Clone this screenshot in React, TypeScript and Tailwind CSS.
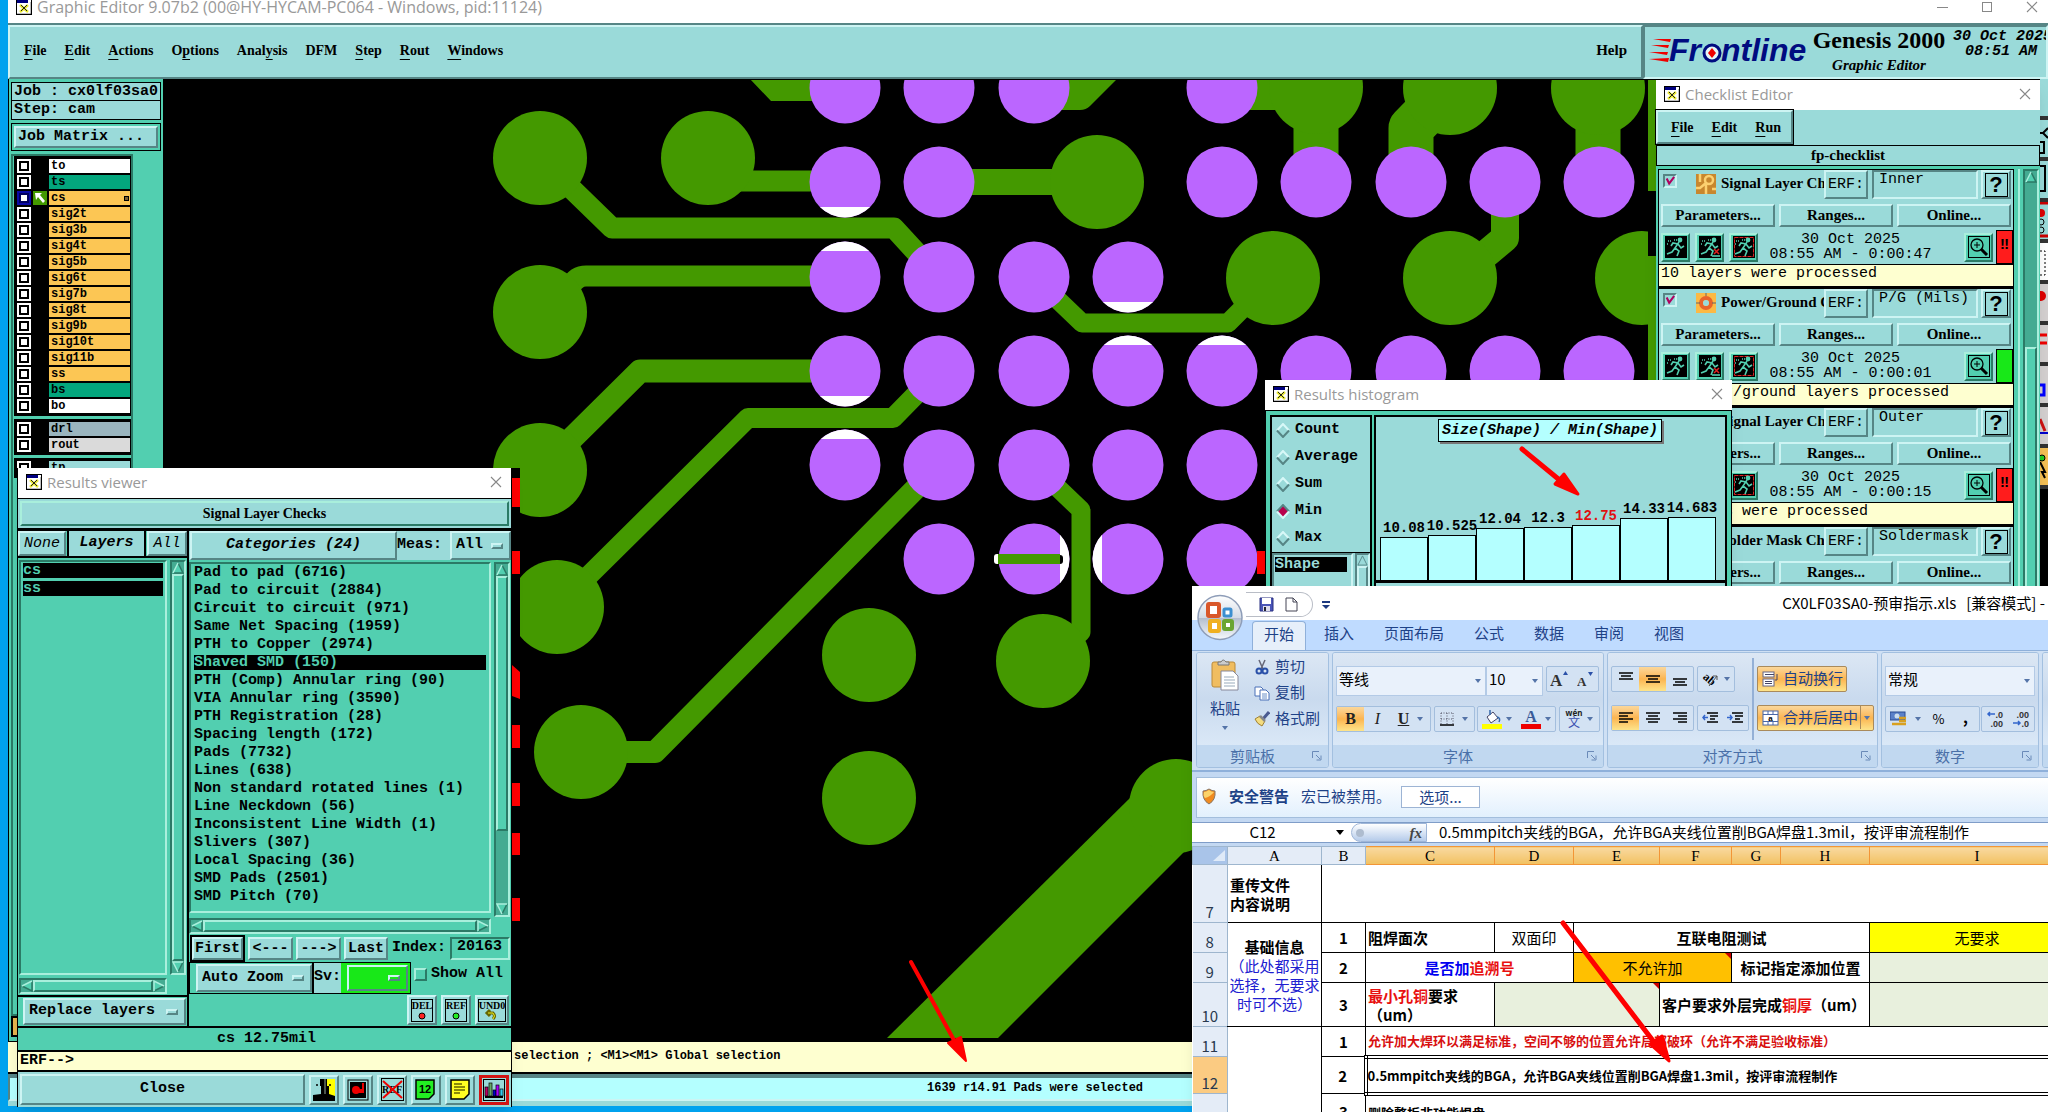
import React from "react";

const OUT =
  "border-2 border-t-[#cdf4f3] border-l-[#cdf4f3] border-r-[#568585] border-b-[#568585]";
const IN =
  "border-2 border-t-[#568585] border-l-[#568585] border-r-[#cdf4f3] border-b-[#cdf4f3]";
const T_OUT =
  "border-2 border-t-[#a9efdc] border-l-[#a9efdc] border-r-[#2b7a66] border-b-[#2b7a66]";
const T_IN =
  "border-2 border-t-[#2b7a66] border-l-[#2b7a66] border-r-[#a9efdc] border-b-[#a9efdc]";
const MONO = "font-['Liberation_Mono',monospace]";
const SERIF = "font-['Liberation_Serif',serif]";
const CJK = "font-['Noto_Sans_CJK_SC',sans-serif]";

/* ---------- shared pieces ---------- */

function AppIcon() {
  return (
    <svg width="16" height="16" viewBox="0 0 16 16" className="shrink-0">
      <rect x="0.5" y="0.5" width="15" height="15" fill="#fff" stroke="#000" />
      <rect x="1" y="1" width="11" height="3" fill="#000080" />
      <path d="M4 6 L12 13 M12 6 L4 13" stroke="#eaea30" strokeWidth="2.5" />
      <path d="M5 6 L11 12 M11 6 L5 12" stroke="#222" strokeWidth="1" />
      <path d="M15.500 3 V15.500 H1" stroke="#000" strokeWidth="1.500" fill="none" />
    </svg>
  );
}

function Cross() {
  return (
    <svg width="12" height="12" viewBox="0 0 12 12">
      <path d="M1 1 L11 11 M11 1 L1 11" stroke="#888" strokeWidth="1.1" />
    </svg>
  );
}

function TitleBar({ title }: { title: string }) {
  return (
    <header className="flex h-[30px] shrink-0 items-center bg-white pr-[9px] pb-[2px] pl-2">
      <AppIcon />
      <h2 className="ml-[5px] font-['Open_Sans',sans-serif] text-[15px] leading-5 font-normal text-[#999]">{title}</h2>
      <button aria-label={"Close " + title} className="ml-auto">
        <Cross />
      </button>
    </header>
  );
}

function Menu({ items }: { items: string[][] }) {
  return (
    <nav className={SERIF + " flex gap-[18px] text-[14px] font-bold text-black"}>
      {items.map(([pre, key, post]) => (
        <button key={pre + key + post}>
          {pre}
          <span className="underline decoration-1 underline-offset-4">{key}</span>
          {post}
        </button>
      ))}
    </nav>
  );
}

function Arrow({ d }: { d: "up" | "down" | "left" | "right" }) {
  const shapes = {
    up: ["M6 1 L11 11 H1 Z", "M6 1 L11 11 H1", "M1 11 L6 1"],
    down: ["M6 11 L1 1 H11 Z", "M6 11 L11 1", "M11 1 H1 L6 11"],
    left: ["M1 6 L11 1 V11 Z", "M11 1 V11 L1 6", "M1 6 L11 1"],
    right: ["M11 6 L1 1 V11 Z", "M1 11 L11 6", "M1 11 V1 L11 6"],
  };
  const [body, dark, light] = shapes[d];
  return (
    <svg width="12" height="12" viewBox="0 0 12 12" className="shrink-0">
      <path d={body} fill="#52cfb0" />
      <path d={dark} fill="none" stroke="#2b7a66" strokeWidth="1.5" />
      <path d={light} fill="none" stroke="#a9efdc" strokeWidth="1.5" />
    </svg>
  );
}

function VScroll({ rest }: { rest?: boolean }) {
  return (
    <div className={T_IN + " flex w-4 shrink-0 flex-col bg-[#44ab92]"}>
      <Arrow d="up" />
      <div className={T_OUT + " flex-[7] bg-[#52cfb0]"} />
      {rest && <div className="flex-[2]" />}
      <Arrow d="down" />
    </div>
  );
}

function HScroll() {
  return (
    <div className={T_IN + " flex h-4 shrink-0 bg-[#44ab92]"}>
      <Arrow d="left" />
      <div className={T_OUT + " flex-1 bg-[#52cfb0]"} />
      <Arrow d="right" />
    </div>
  );
}

function OptionMenu({ label, value, className, bg = "bg-[#9adad9]" }: { label: string; value: string; className: string; bg?: string }) {
  return (
    <div className={"relative " + className}>
      <select
        aria-label={label}
        className={OUT + " h-full w-full appearance-none pl-1 font-bold outline-none " + bg}
      >
        <option>{value}</option>
      </select>
      <span className={OUT + " pointer-events-none absolute top-1/2 right-2 h-[6px] w-3 -translate-y-1/2 " + bg} />
    </div>
  );
}

/* ---------- main editor ---------- */

const LAYERS: [string, string][][] = [
  [
    ["to", "bg-white"], ["ts", "bg-[#03a67d]"], ["cs", "bg-[#fcc654]"], ["sig2t", "bg-[#fcc654]"],
    ["sig3b", "bg-[#fcc654]"], ["sig4t", "bg-[#fcc654]"], ["sig5b", "bg-[#fcc654]"], ["sig6t", "bg-[#fcc654]"],
    ["sig7b", "bg-[#fcc654]"], ["sig8t", "bg-[#fcc654]"], ["sig9b", "bg-[#fcc654]"], ["sig10t", "bg-[#fcc654]"],
    ["sig11b", "bg-[#fcc654]"], ["ss", "bg-[#fcc654]"], ["bs", "bg-[#03a67d]"], ["bo", "bg-white"],
  ],
  [["drl", "bg-[#9ab5be]"], ["rout", "bg-[#dadada]"]],
  [["tp", "bg-[#9adad9]"]],
];

function LayerRow({ name, bg }: { name: string; bg: string }) {
  const active = name === "cs";
  return (
    <li className="flex h-4 items-center pl-[2px]">
      <button
        aria-label={"Display layer " + name}
        className={"flex h-[14px] w-[14px] items-center justify-center " + (active ? "bg-[#0a0aa8]" : "bg-white")}
      >
        <span className={"h-[10px] w-[10px] border-2 bg-white " + (active ? "border-[#000060]" : "border-black")} />
      </button>
      <span className="flex h-[14px] w-[18px] items-center justify-center">
        {active && (
          <svg width="14" height="14" viewBox="0 0 14 14">
            <rect width="14" height="14" fill="#449900" />
            <path d="M2 2 H9 L7 4 L12 10 L10 12 L5 6 L3 9 Z" fill="#fff" />
          </svg>
        )}
      </span>
      <span className={"flex h-[14px] w-[81px] items-center justify-between pr-[1px] pl-[2px] leading-[14px] " + bg}>
        {name}
        {active && <span className="h-[5px] w-[5px] border border-black bg-[#7a6030]" />}
      </span>
    </li>
  );
}

function LeftPanel() {
  return (
    <aside className={MONO + " flex w-[155px] shrink-0 flex-col overflow-hidden border-l border-black bg-[#52cfb0] px-[2px] pt-[3px]"}>
      <div className="shrink-0 border border-black bg-[#9adad9] pl-[2px] text-[15px] leading-[17px] font-bold whitespace-nowrap">
        Job : cx0lf03sa0
      </div>
      <div className="shrink-0 border border-t-0 border-black bg-[#9adad9] pl-[2px] text-[15px] leading-[18px] font-bold">
        Step: cam
      </div>
      <div className="mt-[3px] shrink-0 border border-black p-[2px]">
        <button className={OUT + " block w-full bg-[#9adad9] pl-[2px] text-left text-[15px] leading-[18px] font-bold"}>
          Job Matrix ...
        </button>
      </div>
      <div className="mt-[3px] w-[122px] flex-1 overflow-hidden border-2 border-[#2b7a66] text-[12px] font-bold">
        {LAYERS.map((g, i) => (
          <ul key={i} className="mb-[3px] ml-[1px] border border-black bg-black py-[1px]">
            {g.map(([n, bg]) => (
              <LayerRow key={n} name={n} bg={bg} />
            ))}
          </ul>
        ))}
      </div>
      <button aria-label="Grid" className="mb-1 h-[21px] w-5 border-2 border-black bg-[#e9b64e]" />
    </aside>
  );
}

const G = "#449900";
const P = "#bb66ff";
const VIAS = [
  [540, 158], [708, 158], [1097, 182], [540, 312], [540, 470], [557, 607], [581, 752], [869, 655], [869, 798],
  [1043, 661], [1273, 278], [1450, 278], [1642, 278], [1316, 87], [1450, 88], [1598, 88], [1176, 806],
];
const COLS = [845, 939, 1034, 1128, 1222, 1316, 1411, 1505, 1599];
const PADS: [number, number[]][] = [
  [88, [0, 1, 2, 4]],
  [182, [0, 1, 4, 5, 6, 7, 8]],
  [277, [0, 1, 2, 3]],
  [371, [0, 1, 2, 3, 4, 5, 6, 7, 8]],
  [465, [0, 1, 2, 3, 4]],
  [559, [1, 2, 3, 4]],
];
const TRACES: [string, number][] = [
  ["M540 158 L612 228 H894 L939 277", 21],
  ["M730 181 H845", 21],
  ["M570 287 Q576 276 586 276 H845", 21],
  ["M540 470 L640 371 H845", 23],
  ["M557 607 L748 418 H893 L939 371", 20],
  ["M939 465 L655 752 H581", 22],
  ["M1034 465 L1081 510 V632 L1056 654", 19],
  ["M1034 277 L1082 323 H1228 L1273 278", 19],
  ["M939 182 H1097", 26],
  ["M1222 94 H1316", 32],
  ["M1316 87 V182", 45],
  ["M1411 182 V128 L1450 88", 45],
  ["M1598 88 V182", 45],
  ["M1505 182 V238 L1450 284", 28],
];
const CUTS = [
  [845, 182, 207, 1], [845, 277, 251, 0], [845, 371, 396, 1], [845, 465, 439, 0],
  [1128, 277, 302, 1], [1128, 371, 345, 0], [1222, 371, 345, 0],
];

function Board() {
  return (
    <svg className="h-full min-w-0 flex-1 bg-black" aria-label="Board view">
      <defs>
        <clipPath id="col2"><rect x="1060" y="520" width="20" height="80" /></clipPath>
        <clipPath id="col3"><rect x="1080" y="520" width="22" height="80" /></clipPath>
        {CUTS.map(([, , y, down], i) => (
          <clipPath id={"cut" + i} key={i}>
            <rect x="800" width="500" y={down ? y : y - 40} height="40" />
          </clipPath>
        ))}
        <clipPath id="area"><path d="M170 80 H1648 V1038 H520 V468 H170 Z" /></clipPath>
      </defs>
      <g transform="translate(-163 -79)">
        <g clipPath="url(#area)">
          <path d="M750 79 L771 101 H845 V79 Z M1069 79 H1117 L1090 106 Q1086 110 1080 110 H1045 V79 Z" fill={G} />
          <path d="M1131 797 L887 1038 H998 L1184 852 Z" fill={G} />
          {TRACES.map(([d, w]) => (
            <path key={d} d={d} stroke={G} strokeWidth={w} fill="none" strokeLinejoin="round" />
          ))}
          {VIAS.map(([x, y]) => (
            <circle key={x + "-" + y} cx={x} cy={y} r="47" fill={G} />
          ))}
          {PADS.map(([y, cols]) =>
            cols.map((c) => <circle key={c + "-" + y} cx={COLS[c]} cy={y} r="35.5" fill={P} />)
          )}
          {CUTS.map(([x, y], i) => (
            <circle key={i} cx={x} cy={y} r="35.5" fill="#fff" clipPath={"url(#cut" + i + ")"} />
          ))}
          <circle cx="1034" cy="559" r="35.5" fill="#fff" clipPath="url(#col2)" />
          <circle cx="1128" cy="559" r="35.5" fill="#fff" clipPath="url(#col3)" />
          <rect x="994" y="554" width="10" height="10" rx="3" fill="#fff" />
          <rect x="1055" y="555" width="8" height="9" rx="3" fill="#000" />
          <rect x="998" y="554" width="62" height="10" fill={G} />
        </g>
        <path d="M1648 80 h12 v111 h-12 Z M1648 256 h12 v324 h-12 Z" fill={G} />
        <path d="M512 478 h8 v29 h-8 Z M512 551 h8 v23 h-8 Z M512 665 l8 7 v27 l-8 -3 Z M512 725 h8 v23 h-8 Z M512 783 h8 v23 h-8 Z M512 833 h8 v22 h-8 Z M512 898 h8 v23 h-8 Z M1257 551 h8 v23 h-8 Z" fill="#f00" />
      </g>
    </svg>
  );
}

function ToolStrip() {
  const items: [string, React.ReactNode][] = [
    ["bg-[#9adad9]", null],
    ["bg-[#9adad9]", <path d="M8 8 L3 13 H0 M3 13 L8 18 M0 22 H4 V33 H0" stroke="#000" strokeWidth="2" fill="none" />],
    ["bg-[#9adad9]", <path d="M0 5 H5 V30 H0" stroke="#000" strokeWidth="2" fill="none" />],
    ["bg-[#9adad9]", <g><path d="M0 1 H8 M0 34 H8" stroke="#c00" strokeWidth="3" /><circle cx="1" cy="11" r="4" fill="#d00" /><circle cx="1" cy="20" r="3" fill="none" stroke="#000" /><circle cx="1" cy="28" r="3" fill="none" stroke="#000" /></g>],
    ["bg-white", <path d="M0 8 H5 V32 H0" stroke="#000" strokeDasharray="2 2" fill="none" />],
    ["bg-[#d4d0d0]", <circle cx="1" cy="12" r="5" fill="#d00" />],
    ["bg-[#d4d0d0]", <path d="M0 10 H7 M0 18 H7" stroke="#e00" strokeWidth="3" />],
    ["bg-[#d4d0d0]", <path d="M0 19 H4 V29 H0" stroke="#00f" strokeWidth="3" fill="none" />],
    ["bg-[#d4d0d0]", <g><path d="M0 12 L5 24" stroke="#c11" strokeWidth="3" /><path d="M0 26 H8" stroke="#00c" strokeWidth="2" /></g>],
    ["bg-[#f4bf55]", <g><circle cx="2" cy="10" r="3" fill="#2c2" stroke="#000" /><path d="M0 14 L5 24 L2 24 L5 30" stroke="#000" strokeWidth="2" fill="none" /></g>],
  ];
  return (
    <div className="flex w-3 shrink-0 flex-col items-end bg-black">
      {items.map(([bg, art], i) => (
        <span key={i} className={"h-[41px] w-2 shrink-0 border-b-4 border-[#333] " + bg}>
          <svg width="8" height="36" viewBox="0 0 8 36">{art}</svg>
        </span>
      ))}
    </div>
  );
}

function Logo() {
  return (
    <svg width="162" height="28" viewBox="0 0 162 28" role="img" aria-label="Frontline">
      <path d="M4 2 L22 2 L21 5 Z M2 8 L20 8 L19 11 Z M0 15 L19 15 L18 18 Z M0 22 L20 21 L19 25 Z" fill="#e00" />
      <text x="20" y="24" fontFamily="Liberation Sans" fontWeight="bold" fontStyle="italic" fontSize="32" fill="#000c80">Fr</text>
      <circle cx="63" cy="16" r="8" fill="#e4f6f6" stroke="#000c80" strokeWidth="3" />
      <path d="M63 11 L67 16 L63 21 L59 16 Z" fill="#e00" />
      <text x="72" y="24" fontFamily="Liberation Sans" fontWeight="bold" fontStyle="italic" fontSize="32" fill="#000c80">ntline</text>
    </svg>
  );
}

function MainWindow() {
  return (
    <main className="absolute top-0 right-0 bottom-[6px] left-2 flex flex-col bg-white">
      <header className="flex h-[23px] shrink-0 items-start overflow-hidden pr-[10px] pl-2">
        <span className="-mt-px"><AppIcon /></span>
        <h1 className="-mt-[3px] ml-[5px] font-['Open_Sans',sans-serif] text-[16px] leading-5 font-normal whitespace-nowrap text-[#999]">
          Graphic Editor 9.07b2 (00@HY-HYCAM-PC064 - Windows, pid:11124)
        </h1>
        <div className="ml-auto flex items-center gap-[34px] pt-px">
          <button aria-label="Minimize" className="h-px w-[11px] bg-[#888]" />
          <button aria-label="Maximize" className="h-[10px] w-[10px] border border-[#888]" />
          <button aria-label="Close"><Cross /></button>
        </div>
      </header>
      <div className="flex h-14 shrink-0 border-t-2 border-[#568585] bg-[#9adad9]">
        <div className={OUT + " flex flex-1 items-center pr-[14px] pb-1 pl-[14px]"}>
          <Menu
            items={[["", "F", "ile"], ["", "E", "dit"], ["", "A", "ctions"], ["O", "p", "tions"], ["Anal", "y", "sis"], ["DFM", "", ""], ["", "S", "tep"], ["", "R", "out"], ["", "W", "indows"]]}
          />
          <button className={SERIF + " ml-auto text-[15px] font-bold"}>Help</button>
        </div>
        <div className={IN + " flex w-[405px] overflow-hidden pl-1"}>
          <div className="pt-[10px]"><Logo /></div>
          <div className={SERIF + " w-[136px] shrink-0 text-center font-bold whitespace-nowrap"}>
            <div className="text-[24px] leading-[27px]">Genesis 2000</div>
            <div className="text-[15px] leading-[22px] italic">Graphic Editor</div>
          </div>
          <div className={MONO + " ml-[6px] shrink-0 pt-[2px] text-[15px] leading-[15px] font-bold whitespace-nowrap italic"}>
            <div>30 Oct 2025</div>
            <div className="pl-3">08:51 AM</div>
          </div>
        </div>
      </div>
      <div className="flex min-h-0 flex-1">
        <LeftPanel />
        <Board />
        <ToolStrip />
      </div>
      <div className="h-[31px] shrink-0 border-t border-black bg-[#feffd0] pl-[506px]">
        <p className={MONO + " text-[12px] leading-[29px] font-bold"}>selection ; &lt;M1&gt;&lt;M1&gt; Global selection</p>
      </div>
      <div className="flex h-[34px] shrink-0 flex-col border-t-2 border-black bg-[#9adad9]">
        <div className={IN + " h-[27px] border-t-4 bg-[#b4ffff] pl-[917px]"}>
          <p className={MONO + " text-[12px] leading-[21px] font-bold"}>1639 r14.91 Pads were selected</p>
        </div>
      </div>
    </main>
  );
}

/* ---------- results viewer ---------- */

const CATEGORIES = [
  "Pad to pad (6716)", "Pad to circuit (2884)", "Circuit to circuit (971)", "Same Net Spacing (1959)",
  "PTH to Copper (2974)", "Shaved SMD (150)", "PTH (Comp) Annular ring (90)", "VIA Annular ring (3590)",
  "PTH Registration (28)", "Spacing length (172)", "Pads (7732)", "Lines (638)",
  "Non standard rotated lines (1)", "Line Neckdown (56)", "Inconsistent Line Width (1)", "Slivers (307)",
  "Local Spacing (36)", "SMD Pads (2501)", "SMD Pitch (70)",
];

function MarkButton({ label, art, className = "w-[30px]" }: { label: string; art: React.ReactNode; className?: string }) {
  return (
    <button
      aria-label={label}
      className={OUT + " flex h-[30px] shrink-0 items-center justify-center bg-[#9adad9] " + className}
    >
      {art}
    </button>
  );
}

function Tag({ text, w, children }: { text: string; w: number; children?: React.ReactNode }) {
  return (
    <svg width={w} height="23" viewBox={"0 0 " + w + " 23"} className="shrink-0">
      <rect x="0.5" y="0.5" width={w - 1} height="22" fill="none" stroke="#000" />
      <text x={w / 2} y="10" textAnchor="middle" fontFamily="Liberation Serif" fontSize="10" fill="#000">{text}</text>
      {children}
    </svg>
  );
}

function ResultsViewer() {
  return (
    <section className={MONO + " absolute top-[468px] left-[17px] flex w-[495px] flex-col border-x border-black bg-[#52cfb0] text-[15px] font-bold text-black shadow-lg"}>
      <TitleBar title="Results viewer" />
      <div className="border-y border-black bg-[#9adad9] p-[2px]">
        <div className={T_OUT + " text-center text-[14px] leading-[21px] " + SERIF}>Signal Layer Checks</div>
      </div>
      <div className="flex h-[499px] border-y-2 border-black">
        <div className="flex w-[171px] shrink-0 flex-col border-r-2 border-black">
          <div className="flex h-[27px] shrink-0 border-b-2 border-black italic">
            <button className={OUT + " w-12 bg-[#9adad9] font-normal"}>None</button>
            <span className="mx-px flex-1 border-x-2 border-black bg-[#9adad9] text-center leading-[24px]">Layers</span>
            <button className={OUT + " w-10 bg-[#9adad9] font-normal"}>All</button>
          </div>
          <div className="flex min-h-0 flex-1 gap-[3px] px-px pt-[2px]">
            <div className="flex min-w-0 flex-1 flex-col gap-[3px]">
              <ul className={T_IN + " flex-1 pt-px pr-[2px] pl-[2px] text-[#52cfb0]"}>
                <li className="mb-[3px] bg-black leading-[15px]">cs</li>
                <li className="bg-black leading-[15px]">ss</li>
              </ul>
              <HScroll />
            </div>
            <div className="flex pb-[19px]"><VScroll /></div>
          </div>
          <div className="mt-px h-[31px] shrink-0 border-t-2 border-black p-px pl-[5px]">
            <OptionMenu label="Layer action" value="Replace layers" className="h-full w-full" />
          </div>
        </div>
        <div className="flex min-w-0 flex-1 flex-col">
          <div className="flex h-[29px] shrink-0 items-stretch bg-[#9adad9]">
            <button className={OUT + " ml-px w-[207px] italic"}>Categories (24)</button>
            <label className="flex-1 leading-[28px]">Meas:</label>
            <OptionMenu label="Meas" value="All" className="w-[61px]" />
          </div>
          <div className="flex h-[374px] shrink-0 gap-[3px] pt-[2px] pr-px">
            <div className="flex min-w-0 flex-1 flex-col gap-[5px]">
              <ul className={T_IN + " flex-1 pt-px pr-[3px] pl-[3px]"}>
                {CATEGORIES.map((c) => (
                  <li
                    key={c}
                    className={"mb-[3px] leading-[15px] whitespace-nowrap " + (c.startsWith("Shaved") ? "bg-black text-[#52cfb0]" : "")}
                  >
                    {c}
                  </li>
                ))}
              </ul>
              <HScroll />
            </div>
            <div className="flex pb-[17px]"><VScroll rest /></div>
          </div>
          <div className="flex h-7 shrink-0 items-center gap-[3px] px-px pt-px">
            <span className="border-2 border-black"><button className={OUT + " w-[51px] bg-[#9adad9] leading-[19px]"}>First</button></span>
            <button className={OUT + " w-[45px] bg-[#9adad9] leading-[19px]"}>&lt;---</button>
            <button className={OUT + " w-[45px] bg-[#9adad9] leading-[19px]"}>---&gt;</button>
            <button className={OUT + " w-11 bg-[#9adad9] leading-[19px]"}>Last</button>
            <label htmlFor="index" className="pl-px">Index:</label>
            <input id="index" defaultValue="20163" className={T_IN + " ml-auto h-[23px] w-[60px] pb-1 pl-[5px] font-bold outline-none"} />
          </div>
          <div className="flex h-8 shrink-0 items-start">
            <div className="flex h-8 items-stretch border border-black">
              <OptionMenu label="Zoom mode" value="Auto Zoom" className="ml-[6px] w-[116px] py-px" />
              <label className="border-l-2 border-black bg-[#9adad9] leading-[28px]">Sv:</label>
              <div className="w-[69px] bg-[#18e818] p-[2px] pl-[6px]">
                <OptionMenu label="Severity" value="" className="h-full w-full" bg="bg-[#18e818]" />
              </div>
            </div>
            <label className="flex items-center gap-1 pt-[3px] pl-[3px] leading-[18px]">
              <input type="checkbox" className={T_OUT + " h-[13px] w-[13px] appearance-none border"} />
              Show All
            </label>
          </div>
          <div className="flex flex-1 items-center justify-end gap-1 pr-[2px]">
            <MarkButton label="Delete" art={<Tag text="DEL" w={22}><circle cx="11" cy="17" r="3" fill="#f22" stroke="#000" /></Tag>} />
            <MarkButton label="Reference" art={<Tag text="REF" w={22}><circle cx="11" cy="17" r="3" fill="#2e2" stroke="#000" /></Tag>} />
            <MarkButton label="Undo" className="w-[34px]" art={<Tag text="UND0" w={28}><path d="M10 14 h5 q3 3 0 6 M12 11 l-3 3 l3 3" stroke="#660" strokeWidth="3" fill="none" /><path d="M10 14 h5 q3 3 0 6" stroke="#ee2" fill="none" /></Tag>} />
          </div>
        </div>
      </div>
      <div className="h-[22px] pl-1 text-center leading-[22px]">cs 12.75mil</div>
      <div className="h-[22px] border-y-2 border-t-black border-b-black bg-[#feffd0] pl-[2px] leading-[18px]">ERF--&gt;</div>
      <div className="flex h-[35px] items-center gap-1 bg-[#9adad9] px-[2px]">
        <button className={OUT + " h-[31px] flex-1"}>Close</button>
        <MarkButton label="Compare" art={<svg width="22" height="22" viewBox="0 0 22 22"><rect width="11" height="22" fill="#9adad9" /><rect x="11" width="11" height="22" fill="#ff0" /><path d="M7 0 H14 V7 H16 V15 L22 17 V22 H0 V16 L8 15 V7 H7 Z" fill="#000" /><path d="M12 0 V15" stroke="#9a9" /><path d="M4 5 V7 M17 5 V7" stroke="#000" strokeWidth="1.5" /></svg>} />
        <MarkButton label="Record" art={<svg width="22" height="22" viewBox="0 0 22 22"><rect x="1" y="1" width="20" height="20" fill="#9adad9" stroke="#000" /><rect x="3" y="3" width="16" height="16" fill="#000" /><circle cx="9" cy="11" r="4" fill="#e00" /><path d="M10 10 h5 v-6 h2 v10 h-6" fill="#e00" /></svg>} />
        <MarkButton label="Clear reference" art={<Tag text="" w={23}><text x="11" y="15" textAnchor="middle" fontFamily="Liberation Serif" fontSize="10">REF</text><path d="M2 3 L21 20 M21 3 L2 20" stroke="#e00" strokeWidth="2" /></Tag>} />
        <MarkButton label="Numbers" art={<svg width="22" height="22" viewBox="0 0 22 22"><path d="M1 1 H19 V15 L14 20 H1 Z" fill="#2e2" stroke="#000" strokeWidth="1.5" /><text x="10" y="14" textAnchor="middle" fontFamily="Liberation Sans" fontWeight="bold" fontSize="11">12</text></svg>} />
        <MarkButton label="Notes" art={<svg width="22" height="22" viewBox="0 0 22 22"><path d="M2 1 H20 V15 L15 20 H2 Z" fill="#ff2" stroke="#000" strokeWidth="1.5" /><path d="M5 5 H13 M5 8 H16 M5 11 H16 M5 14 H11" stroke="#660" strokeWidth="1.3" /></svg>} />
        <button aria-label="Histogram" className="flex h-[30px] w-[30px] shrink-0 items-center justify-center border-[3px] border-[#d11414] bg-[#9adad9]">
          <svg width="24" height="24" viewBox="0 0 24 24" className="shrink-0">
            <rect x="1.5" y="1.5" width="21" height="21" fill="none" stroke="#000" />
            <path d="M3 19 H21" stroke="#000" strokeWidth="2" />
            <rect x="3" y="9" width="3" height="9" fill="#b06" stroke="#000" strokeWidth="0.7" />
            <rect x="7" y="5" width="3" height="13" fill="#6a6" stroke="#000" strokeWidth="0.7" />
            <rect x="11" y="12" width="3" height="6" fill="#00c" stroke="#000" strokeWidth="0.7" />
            <rect x="14" y="7" width="3" height="11" fill="#a0f" stroke="#000" strokeWidth="0.7" />
            <rect x="18" y="11" width="3" height="7" fill="#3ce" stroke="#000" strokeWidth="0.7" />
          </svg>
        </button>
      </div>
    </section>
  );
}

/* ---------- checklist ---------- */

function Runner({ kind }: { kind: number }) {
  return (
    <button aria-label={"Run mode " + (kind + 1)} className={T_OUT + " flex h-[29px] w-[29px] items-center justify-center bg-[#52cfb0]"}>
      <svg width="22" height="22" viewBox="0 0 22 22">
        <rect width="22" height="22" fill="#000" />
        {kind === 2 && <rect x="1.5" y="1.5" width="19" height="19" fill="none" stroke="#d22" strokeDasharray="4 1" />}
        <g stroke="#52cfb0" fill="none" strokeWidth="1.6">
          <circle cx="15" cy="4" r="1.6" fill="#52cfb0" />
          <path d="M14 6 L10 12 L14 15 L12 20 M10 12 L7 16 L2 18 M13 8 L8 7 L6 10 M13 8 L16 12 L19 10" />
          <path d="M3 5 h3 M9 4 h3 M2 8 h2" strokeDasharray="1 1" />
          {kind === 1 && <path d="M13 20 H21" />}
        </g>
        {kind === 1 && <path d="M15 13 L20 18 M20 13 L15 18" stroke="#d22" strokeWidth="1.5" />}
      </svg>
    </button>
  );
}

const CHECKS = [
  { t: "Signal Layer Ch", erf: "Inner", time: "08:55 AM - 0:00:47", msg: "10 layers were processed", bad: true },
  { t: "Power/Ground C", erf: "P/G (Mils)", time: "08:55 AM - 0:00:01", msg: "10 power/ground layers processed", bad: false },
  { t: "Signal Layer Ch", erf: "Outer", time: "08:55 AM - 0:00:15", msg: "2 layers were processed", bad: true },
  { t: "Solder Mask Ch", erf: "Soldermask", time: "", msg: "", bad: false },
];

function CheckItem({ c, i }: { c: (typeof CHECKS)[number]; i: number }) {
  return (
    <li className={MONO + " h-[119px] shrink-0 border-b-[3px] border-black bg-[#9adad9] text-[15px]"}>
      <div className="flex h-[30px] pr-[2px] pl-1">
        <label className={IN + " mt-1 flex h-[14px] w-[14px] items-center justify-center border"}>
          <input type="checkbox" defaultChecked aria-label={c.t} className="peer sr-only" />
          <svg width="12" height="12" viewBox="0 0 12 12"><path d="M2 3 L5 9 L11 1" stroke="#b00060" strokeWidth="2.5" fill="none" /></svg>
        </label>
        <svg width="20" height="20" viewBox="0 0 20 20" className="mt-1 ml-[19px] shrink-0">
          <rect width="20" height="20" fill={i === 1 ? "#fcb944" : "#c8872e"} />
          {i === 1 ? (
            <g><circle cx="10" cy="10" r="5" fill="none" stroke="#e8642a" strokeWidth="4" /><path d="M0 10 H4 M16 10 H20 M10 0 V3" stroke="#666" /><circle cx="10" cy="10" r="3" fill="#9adad9" /></g>
          ) : (
            <g fill="none" stroke="#fcd070" strokeWidth="2.5"><circle cx="13" cy="6" r="4" /><path d="M10 9 L4 14 H0 M4 0 V8 M10 10 V20 M16 15 H20" /></g>
          )}
        </svg>
        <span className={SERIF + " ml-[5px] w-[103px] shrink-0 overflow-hidden text-[15px] leading-[26px] font-bold whitespace-nowrap"}>{c.t}</span>
        <label htmlFor={"erf" + i} className={OUT + " h-[29px] w-[44px] shrink-0 text-center leading-[25px]"}>ERF:</label>
        <input id={"erf" + i} defaultValue={c.erf} className={IN + " ml-1 h-[29px] w-[106px] pb-[10px] pl-[5px] outline-none"} />
        <button className={OUT + " ml-auto flex h-[29px] w-[30px] items-center justify-center"}>
          <span className="w-[23px] border border-black font-['Liberation_Sans',sans-serif] text-[22px] leading-[22px] font-bold">?</span>
        </button>
      </div>
      <div className={SERIF + " flex h-[30px] items-center gap-1 px-[2px] font-bold"}>
        <button className={OUT + " flex-1 leading-[19px]"}>Parameters...</button>
        <button className={OUT + " flex-1 leading-[19px]"}>Ranges...</button>
        <button className={OUT + " flex-1 leading-[19px]"}>Online...</button>
      </div>
      <div className="flex h-[34px] items-center gap-[5px] pl-[2px]">
        <Runner kind={0} />
        <Runner kind={1} />
        <Runner kind={2} />
        <div className="flex-1 pr-[13px] text-center leading-[15px] whitespace-nowrap">
          30 Oct 2025
          <br />
          {c.time}
        </div>
        <button aria-label="View results" className={T_OUT + " ml-2 flex h-[29px] w-[29px] items-center justify-center bg-[#52cfb0]"}>
          <svg width="22" height="22" viewBox="0 0 22 22">
            <rect x="0.5" y="0.5" width="21" height="21" fill="none" stroke="#000" />
            <circle cx="9" cy="9" r="6" fill="none" stroke="#000" strokeWidth="1.3" />
            <path d="M6 9 H12 M9 6 V12" stroke="#000" />
            <path d="M13 13 L19 19" stroke="#000" strokeWidth="3" />
          </svg>
        </button>
        <span className={"-ml-[2px] w-[17px] self-stretch border border-black text-center leading-[30px] font-bold " + (c.bad ? "bg-[#ff1c1c]" : "bg-[#18e818]")}>
          {c.bad ? "‼" : ""}
        </span>
      </div>
      <div className="h-[22px] border-t border-black bg-[#feffd0] pl-[2px] leading-[18px] whitespace-nowrap">{c.msg}</div>
    </li>
  );
}

function Checklist() {
  return (
    <section className="absolute top-20 left-[1656px] flex h-[520px] w-[384px] flex-col bg-[#9adad9] text-black shadow-lg">
      <TitleBar title="Checklist Editor" />
      <div className={OUT + " flex h-[34px] w-[137px] shrink-0 items-center pl-[13px] outline outline-black"}>
        <Menu items={[["", "F", "ile"], ["", "E", "dit"], ["", "R", "un"]]} />
      </div>
      <div className={SERIF + " mt-px h-[21px] shrink-0 border border-black text-center text-[15px] leading-[19px] font-bold"}>fp-checklist</div>
      <div className="flex min-h-0 flex-1 bg-[#52cfb0] pt-[3px]">
        <ul className="ml-[2px] flex w-[356px] shrink-0 flex-col overflow-hidden border border-black">
          {CHECKS.map((c, i) => (
            <CheckItem key={i} c={c} i={i} />
          ))}
        </ul>
        <div className="ml-1 w-[2px] bg-[#a9efdc]" />
        <div className={T_IN + " ml-[3px] flex w-4 flex-col bg-[#44ab92]"}>
          <Arrow d="up" />
          <div className={T_OUT + " mt-[164px] flex-1 bg-[#52cfb0]"} />
        </div>
      </div>
    </section>
  );
}

/* ---------- histogram ---------- */

const BARS: [string, number][] = [
  ["10.08", 43], ["10.525", 45], ["12.04", 52], ["12.3", 53], ["12.75", 55], ["14.33", 62], ["14.683", 63],
];

function Histogram() {
  return (
    <section className={MONO + " absolute top-[380px] left-[1265px] flex h-[220px] w-[467px] flex-col bg-[#52cfb0] text-[15px] font-bold text-black shadow-lg"}>
      <TitleBar title="Results histogram" />
      <div className="flex min-h-0 flex-1 gap-[2px] border border-black p-1 pr-[4px] pb-0">
        <div className="w-[102px] shrink-0 border-2 border-black bg-[#9adad9]">
          <fieldset className="border-b border-black pl-1">
            {["Count", "Average", "Sum", "Min", "Max"].map((n) => (
              <label key={n} className="flex h-[27px] items-center gap-[5px]">
                <input type="radio" name="metric" defaultChecked={n === "Min"} className="sr-only" />
                <svg width="14" height="15" viewBox="0 0 14 15">
                  <path d="M7 1 L13 7.500 L7 14 L1 7.500 Z" fill={n === "Min" ? "#b8004c" : "#9adad9"} />
                  <path d="M1 7.500 L7 1 L13 7.500" fill="none" stroke={n === "Min" ? "#568585" : "#d8f8f8"} strokeWidth="2" />
                  <path d="M1 7.500 L7 14 L13 7.500" fill="none" stroke={n === "Min" ? "#d8f8f8" : "#568585"} strokeWidth="2" />
                </svg>
                {n}
              </label>
            ))}
          </fieldset>
          <div className="flex h-9 justify-between overflow-hidden">
            <div className={IN + " h-20 w-[81px] pt-[2px] pr-1 pl-px"}>
              <div className="bg-black leading-[15px] text-[#9adad9]">Shape</div>
            </div>
            <div className={IN + " h-20 w-[15px]"}>
              <svg width="11" height="11" viewBox="0 0 12 12"><path d="M6 1 L11 11 H1 Z" fill="#9adad9" stroke="#568585" /></svg>
              <div className={OUT + " h-20"} />
            </div>
          </div>
        </div>
        <div className="flex min-w-0 flex-1 flex-col border-2 border-black bg-[#9adad9]">
          <div className="mt-[2px] ml-[62px] w-[224px] border border-black bg-[#b4ffff] text-center leading-[21px] italic shadow-[2px_2px_0_#777]">
            Size(Shape) / Min(Shape)
          </div>
          <div className="ml-[4px] flex h-[138px] items-end">
            {BARS.map(([n, h]) => (
              <div key={n} className="flex w-12 flex-col items-center">
                <span className={"text-[14px] leading-[17px] whitespace-nowrap " + (n === "12.75" ? "text-[#e01010]" : "")}>{n}</span>
                <div className="w-full border border-b-0 border-black bg-[#b4ffff]" style={{ height: h }} />
              </div>
            ))}
          </div>
          <div className="h-[3px] shrink-0 bg-black" />
        </div>
      </div>
    </section>
  );
}

/* ---------- spreadsheet ---------- */

const BOX = "flex items-stretch rounded-[2px] border border-[#a3bedd] bg-[#d3e2f3]";
const HOT = "bg-gradient-to-b from-[#fbd79a] via-[#fbb550] to-[#fde48a]";

function Caret() {
  return (
    <svg width="6" height="4" viewBox="0 0 6 4" className="shrink-0"><path d="M0 0 H6 L3 4 Z" fill="#5474a8" /></svg>
  );
}

function Lines({ rows, top = 4 }: { rows: number[][]; top?: number }) {
  return (
    <svg width="16" height="16" viewBox="0 0 16 16">
      {rows.map(([x, w], i) => (
        <path key={i} d={"M" + x + " " + (top + i * 3) + " h" + w} stroke="#000" strokeWidth="1.5" />
      ))}
    </svg>
  );
}

function Tool({ label, hot, className = "w-[27px]", children }: { label: string; hot?: boolean; className?: string; children: React.ReactNode }) {
  return (
    <button aria-label={label} className={"flex items-center justify-center gap-1 " + (hot ? HOT + " " : "") + className}>
      {children}
    </button>
  );
}

function Group({ name, className, children }: { name: string; className: string; children: React.ReactNode }) {
  return (
    <section className={"flex h-[116px] shrink-0 flex-col overflow-hidden rounded-[3px] border border-[#a3c0e0] " + className}>
      <div className="flex-1 bg-gradient-to-b from-[#dce7f4] via-[#c9daee] to-[#dae8f7]">{children}</div>
      <footer className="flex h-[22px] items-center bg-[#c1d8f0]">
        <h3 className="flex-1 pr-1 text-center leading-[20px] font-normal text-[#4a70a8]">{name}</h3>
        <svg width="10" height="10" viewBox="0 0 10 10" className="mr-[6px]">
          <path d="M0.500 7 V0.500 H7 M4 4 L8 8 M9 4.500 V9 H4.500" stroke="#6a8ab8" fill="none" />
        </svg>
      </footer>
    </section>
  );
}

function Combo({ label, value, className }: { label: string; value: string; className: string }) {
  return (
    <div className={"relative h-[30px] border border-[#b3cae6] bg-[#e9f1fb] " + className}>
      <select aria-label={label} className="h-full w-full appearance-none bg-transparent pb-[3px] pl-[2px] text-black outline-none">
        <option>{value}</option>
      </select>
      <span className="pointer-events-none absolute top-1/2 right-1 flex -translate-y-1/2"><Caret /></span>
    </div>
  );
}

function Office() {
  return (
    <svg width="46" height="47" viewBox="0 0 46 47">
      <defs>
        <linearGradient id="orb" x1="0" y1="0" x2="0" y2="1">
          <stop offset="0" stopColor="#fff" />
          <stop offset="0.5" stopColor="#d4dbe6" />
          <stop offset="0.52" stopColor="#b4bfd0" />
          <stop offset="1" stopColor="#f6f9fc" />
        </linearGradient>
      </defs>
      <circle cx="23" cy="23.500" r="22" fill="url(#orb)" stroke="#8e9db8" strokeWidth="1.500" />
      <rect x="11" y="10" width="11" height="12" rx="1" fill="#fff" stroke="#d9572a" strokeWidth="4" />
      <rect x="27" y="15" width="7" height="7" rx="1" fill="#fff" stroke="#3c8fd0" strokeWidth="3" />
      <rect x="13" y="27" width="9" height="10" rx="1" fill="#fff" stroke="#f0b020" strokeWidth="4" />
      <rect x="27" y="27" width="8" height="8" rx="1" fill="#fff" stroke="#6aa532" strokeWidth="4" />
    </svg>
  );
}

function Ribbon() {
  return (
    <div className="flex h-[122px] gap-[3px] overflow-hidden border-t border-b-2 border-[#8fb0da] bg-[#cfe0f4] py-px pl-1">
      <Group name="剪贴板" className="w-[133px]">
        <div className="flex gap-[13px] pt-[3px] pl-[12px]">
          <button className="flex w-8 flex-col items-center pt-[3px]">
            <svg width="28" height="32" viewBox="0 0 28 32">
              <rect x="1" y="3" width="23" height="25" rx="2" fill="#f0bd60" stroke="#b98a3a" />
              <path d="M7 6 V3 H10 Q12 -1 15 3 H18 V6 Z" fill="#ccc" stroke="#777" />
              <path d="M10 12 H22 L27 17 V31 H10 Z" fill="#fff" stroke="#889" />
              <path d="M13 18 H23 M13 21 H24 M13 24 H24 M13 27 H24" stroke="#9ab" />
            </svg>
            <span className="mt-[7px] leading-5 whitespace-nowrap">粘贴</span>
            <span className="mt-2"><Caret /></span>
          </button>
          <div className="flex flex-col gap-[5px]">
            <button className="flex h-[21px] items-center gap-[5px]">
              <svg width="16" height="16" viewBox="0 0 16 16" fill="none"><path d="M5 1 L9 10 M11 1 L7 10" stroke="#667" strokeWidth="1.5" /><circle cx="5" cy="12" r="2.500" stroke="#2a50a8" strokeWidth="2" /><circle cx="11" cy="12" r="2.500" stroke="#2a50a8" strokeWidth="2" /></svg>
              剪切
            </button>
            <button className="flex h-[21px] items-center gap-[5px]">
              <svg width="16" height="16" viewBox="0 0 16 16"><path d="M1 2 H7 L9 4 V11 H1 Z" fill="#fff" stroke="#4a70b8" /><path d="M6 5 H12 L15 8 V15 H6 Z" fill="#fff" stroke="#4a70b8" /><path d="M8 9 H13 M8 11 H13 M8 13 H13" stroke="#6a90c8" /></svg>
              复制
            </button>
            <button className="flex h-[21px] items-center gap-[5px]">
              <svg width="16" height="16" viewBox="0 0 16 16"><path d="M15 1 L9 8" stroke="#4a5a90" strokeWidth="3" /><path d="M1 8 L6 5 L11 10 L8 15 Q3 13 1 8 Z" fill="#f3dc80" stroke="#a08030" /><path d="M6 5 L11 10" stroke="#888" strokeWidth="2.500" /></svg>
              格式刷
            </button>
          </div>
        </div>
      </Group>
      <Group name="字体" className="w-[272px]">
        <div className="flex flex-col gap-[10px] px-[3px] pt-[13px]">
          <div className="flex">
            <Combo label="字体名称" value="等线" className="w-[150px]" />
            <Combo label="字号" value="10" className="w-[57px]" />
            <div className={BOX + " ml-[3px] h-[26px]"}>
              <Tool label="增大字号" className="w-[26px]">
                <svg width="20" height="18" viewBox="0 0 20 18"><text x="0" y="16" fontFamily="Liberation Serif" fontWeight="bold" fontSize="17" fill="#333">A</text><path d="M13 5 L15.500 1 L18 5 Z" fill="#2a50a8" /></svg>
              </Tool>
              <Tool label="减小字号" className="w-[25px]">
                <svg width="18" height="18" viewBox="0 0 18 18"><text x="0" y="16" fontFamily="Liberation Serif" fontWeight="bold" fontSize="13" fill="#333">A</text><path d="M11 2 L13.500 6 L16 2 Z" fill="#2a50a8" /></svg>
              </Tool>
            </div>
          </div>
          <div className={SERIF + " flex justify-between text-[16px] text-[#222]"}>
            <div className={BOX + " h-[26px]"}>
              <Tool label="加粗" hot><b>B</b></Tool>
              <Tool label="倾斜"><i>I</i></Tool>
              <Tool label="下划线" className="w-[39px] gap-2"><b className="underline">U</b><Caret /></Tool>
            </div>
            <div className={BOX + " h-[26px]"}>
              <Tool label="边框" className="w-[39px] gap-2">
                <svg width="14" height="14" viewBox="0 0 14 14"><path d="M1 1 H13 M1 7 H13 M1 1 V12 M7 1 V12 M13 1 V12" stroke="#556" strokeDasharray="1 1.500" fill="none" /><path d="M0 13 H14" stroke="#000" strokeWidth="1.500" /></svg>
                <Caret />
              </Tool>
            </div>
            <div className={BOX + " h-[26px]"}>
              <Tool label="填充颜色" className="w-[38px]">
                <svg width="20" height="20" viewBox="0 0 20 20"><path d="M5 8 L11 3 L16 9 L9 14 Z" fill="#fff" stroke="#446" /><path d="M8 6 V1 M15 8 Q19 9 17 13" stroke="#36a" strokeWidth="1.500" fill="none" /><rect y="15" width="20" height="5" fill="#ff0" /></svg>
                <Caret />
              </Tool>
              <Tool label="字体颜色" className="w-[39px]">
                <svg width="20" height="20" viewBox="0 0 20 20"><text x="10" y="13" textAnchor="middle" fontFamily="Liberation Serif" fontWeight="bold" fontSize="16" fill="#3a5a98">A</text><rect y="15" width="20" height="5" fill="#e00" /></svg>
                <Caret />
              </Tool>
            </div>
            <div className={BOX + " h-[26px]"}>
              <Tool label="拼音" className={CJK + " w-[39px]"}>
                <svg width="18" height="20" viewBox="0 0 18 20"><text x="9" y="7" textAnchor="middle" fontFamily="Noto Sans" fontWeight="bold" fontSize="8" fill="#222">wén</text><text x="9" y="18" textAnchor="middle" fontFamily="Noto Sans CJK SC" fontSize="12" fill="#3a50b0">文</text></svg>
                <Caret />
              </Tool>
            </div>
          </div>
        </div>
      </Group>
      <Group name="对齐方式" className="w-[271px]">
        <div className="flex pt-[13px] pl-[3px]">
          <div className="flex flex-col gap-[13px]">
            <div className="flex gap-[3px]">
              <div className={BOX + " h-[26px]"}>
                <Tool label="顶端对齐"><Lines rows={[[1, 14], [3, 10], [1, 14]]} top={2} /></Tool>
                <Tool label="垂直居中" hot><Lines rows={[[1, 14], [3, 10], [1, 14]]} top={5} /></Tool>
                <Tool label="底端对齐"><Lines rows={[[1, 14], [3, 10], [1, 14]]} top={8} /></Tool>
              </div>
              <div className={BOX + " h-[26px]"}>
                <Tool label="方向" className="w-9">
                  <svg width="18" height="18" viewBox="0 0 18 18"><text x="1" y="12" fontFamily="Liberation Serif" fontWeight="bold" fontSize="12" transform="rotate(40 6 9)">ab</text><path d="M7 16 L15 6 M11 6 L15 6 L15 10" stroke="#555" fill="none" /></svg>
                  <Caret />
                </Tool>
              </div>
            </div>
            <div className="flex gap-[3px]">
              <div className={BOX + " h-[26px]"}>
                <Tool label="左对齐" hot><Lines rows={[[1, 14], [1, 9], [1, 14], [1, 9]]} top={3} /></Tool>
                <Tool label="居中"><Lines rows={[[1, 14], [3, 10], [1, 14], [3, 10]]} top={3} /></Tool>
                <Tool label="右对齐"><Lines rows={[[1, 14], [6, 9], [1, 14], [6, 9]]} top={3} /></Tool>
              </div>
              <div className={BOX + " h-[26px]"}>
                <Tool label="减少缩进" className="w-[25px]"><svg width="17" height="16" viewBox="0 0 17 16"><path d="M5 3 H16 M8 6 H16 M8 9 H13 M5 12 H16" stroke="#000" strokeWidth="1.500" /><path d="M6 7.500 H1 M3 5 L1 7.500 L3 10" stroke="#36c" strokeWidth="1.500" fill="none" /></svg></Tool>
                <Tool label="增加缩进" className="w-[25px]"><svg width="17" height="16" viewBox="0 0 17 16"><path d="M5 3 H16 M8 6 H16 M8 9 H13 M5 12 H16" stroke="#000" strokeWidth="1.500" /><path d="M0 7.500 H5 M3 5 L5 7.500 L3 10" stroke="#36c" strokeWidth="1.500" fill="none" /></svg></Tool>
              </div>
            </div>
          </div>
          <div className="-mt-2 mr-[3px] ml-[3px] h-[82px] w-[2px] bg-[#94b0d6]" />
          <div className="flex flex-col items-start gap-[13px]">
            <button className={"flex h-[26px] w-[90px] items-center gap-1 rounded-[2px] border border-[#a98a5c] pb-px pl-1 whitespace-nowrap " + HOT}>
              <svg width="17" height="16" viewBox="0 0 17 16" className="shrink-0"><rect x="1" y="1" width="11" height="5" fill="#fff" stroke="#668" /><rect x="1" y="8" width="11" height="7" fill="#fff" stroke="#668" /><path d="M3 3.500 H12 M3 10.500 H10 M3 12.500 H10" stroke="#446" /><path d="M15 3 V9 H13" stroke="#446" fill="none" /></svg>
              自动换行
            </button>
            <button className={"flex h-[26px] w-[117px] items-center gap-1 rounded-[2px] border border-[#a98a5c] pb-px pl-1 whitespace-nowrap " + HOT}>
              <svg width="17" height="16" viewBox="0 0 17 16" className="shrink-0"><rect x="1" y="1" width="15" height="14" fill="#fff" stroke="#4a68a8" /><path d="M1 4.500 H16 M1 11.500 H16 M6 1 V4 M11 1 V4 M6 12 V15 M11 12 V15" stroke="#4a68a8" /><text x="8.500" y="11" textAnchor="middle" fontFamily="Liberation Sans" fontWeight="bold" fontSize="8">a</text></svg>
              合并后居中
              <span className="-ml-[2px] flex h-full items-center border-l border-[#a98a5c] pl-[3px]"><Caret /></span>
            </button>
          </div>
        </div>
      </Group>
      <Group name="数字" className="w-[158px]">
        <div className="flex flex-col gap-[10px] px-[3px] pt-[13px]">
          <Combo label="数字格式" value="常规" className="w-[150px]" />
          <div className="flex justify-between text-black">
            <div className={BOX + " h-[26px]"}>
              <Tool label="会计数字格式" className="w-[39px] gap-2">
                <svg width="17" height="16" viewBox="0 0 17 16"><rect y="1" width="15" height="8" fill="#5a80c8" stroke="#2a4a90" /><circle cx="7" cy="5" r="2.500" fill="#cde" /><path d="M2 13 H10 M9 7 H16 M9 10 H16 M9 13 H16" stroke="#d8a020" strokeWidth="2.500" /></svg>
                <Caret />
              </Tool>
              <Tool label="百分比"><span className="text-[13px]">%</span></Tool>
              <Tool label="千位分隔"><b className="pb-1 leading-3">,</b></Tool>
            </div>
            <div className={BOX + " h-[26px]"}>
              <Tool label="增加小数位数" className="w-[26px]">
                <svg width="18" height="18" viewBox="0 0 18 18"><path d="M9 4 H2 M4 2 L2 4 L4 6" stroke="#36c" strokeWidth="1.500" fill="none" /><text x="17" y="8" textAnchor="end" fontFamily="Liberation Sans" fontWeight="bold" fontSize="9" fill="#333">.0</text><text x="17" y="17" textAnchor="end" fontFamily="Liberation Sans" fontWeight="bold" fontSize="9" fill="#333">.00</text></svg>
              </Tool>
              <Tool label="减少小数位数" className="w-[26px]">
                <svg width="18" height="18" viewBox="0 0 18 18"><path d="M1 13 H8 M6 11 L8 13 L6 15" stroke="#36c" strokeWidth="1.500" fill="none" /><text x="17" y="8" textAnchor="end" fontFamily="Liberation Sans" fontWeight="bold" fontSize="9" fill="#333">.00</text><text x="17" y="17" textAnchor="end" fontFamily="Liberation Sans" fontWeight="bold" fontSize="9" fill="#333">.0</text></svg>
              </Tool>
            </div>
          </div>
        </div>
      </Group>
      <Group name="" className="w-10">{null}</Group>
    </div>
  );
}

const RH = "border-r border-b border-[#9eb6ce] p-0 pb-px align-bottom font-normal text-[#28384e]";
const C = "border border-black p-0";

function Sheet() {
  return (
    <table className="w-[892px] table-fixed border-collapse bg-white text-[15px] leading-[19px] text-black">
      <colgroup>
        <col className="w-[35px]" />
        <col className="w-[94px]" />
        <col className="w-[44px]" />
        <col className="w-[129px]" />
        <col className="w-[79px]" />
        <col className="w-[86px]" />
        <col className="w-[72px]" />
        <col className="w-[49px]" />
        <col className="w-[89px]" />
        <col className="w-[215px]" />
      </colgroup>
      <thead>
        <tr className={SERIF + " h-[18px] text-[15px] leading-[16px]"}>
          <th className="border border-[#9eb6ce] bg-[#a9c4e9] p-0">
            <svg width="16" height="12" viewBox="0 0 16 12" className="ml-auto"><path d="M14 0 V11 H2 Z" fill="#dfeaf8" /></svg>
          </th>
          {"ABCDEFGHI".split("").map((l, i) => (
            <th
              key={l}
              scope="col"
              className={"p-0 font-normal " + (i < 2 ? "border border-[#9eb6ce] bg-[#e4ecf7]" : "border border-[#f29536] bg-gradient-to-b from-[#f9d99f] to-[#f1c15f]")}
            >
              {l}
            </th>
          ))}
        </tr>
      </thead>
      <tbody>
        <tr className="h-[58px]">
          <th scope="row" className={RH + " bg-[#e4ecf7]"}>7</th>
          <td className="border-r border-b border-black p-0 pl-[2px] font-bold">重传文件<br />内容说明</td>
          <td colSpan={8} className="border-b border-black" />
        </tr>
        <tr className="h-[30px]">
          <th scope="row" className={RH + " bg-[#e4ecf7]"}>8</th>
          <td rowSpan={3} className="border border-l-0 border-black p-0 text-center text-[#2020d0]">
            <b className="text-black">基础信息</b><br />（此处都采用<br />选择，无要求<br />时可不选）
          </td>
          <td className={C + " text-center font-bold"}>1</td>
          <td className={C + " pl-[2px] font-bold"}>阻焊面次</td>
          <td className={C + " text-center"}>双面印</td>
          <td colSpan={4} className={C + " text-center font-bold"}>互联电阻测试</td>
          <td className={C + " bg-[#ffff00] text-center"}>无要求</td>
        </tr>
        <tr className="h-[30px]">
          <th scope="row" className={RH + " bg-[#e4ecf7]"}>9</th>
          <td className={C + " text-center font-bold"}>2</td>
          <td colSpan={2} className={C + " text-center font-bold text-[#0000f0]"}>是否加<span className="text-[#e81010]">追溯号</span></td>
          <td colSpan={2} className={C + " relative bg-[#ffc000] text-center"}>
            不允许加
            <svg width="6" height="6" viewBox="0 0 6 6" className="absolute top-0 right-0"><path d="M0 0 H6 V6 Z" fill="#c00" /></svg>
          </td>
          <td colSpan={2} className={C + " text-center font-bold whitespace-nowrap"}>标记指定添加位置</td>
          <td className={C + " bg-[#e8f0dd]"} />
        </tr>
        <tr className="h-[44px]">
          <th scope="row" className={RH + " bg-[#e4ecf7]"}>10</th>
          <td className={C + " text-center font-bold"}>3</td>
          <td className={C + " pl-[2px] font-bold"}><span className="text-[#e81010]">最小孔铜</span>要求<br />（um）</td>
          <td colSpan={2} className={C + " relative bg-[#e8f0dd]"}>
            <svg width="6" height="6" viewBox="0 0 6 6" className="absolute top-0 right-0"><path d="M0 0 H6 V6 Z" fill="#c00" /></svg>
          </td>
          <td colSpan={3} className={C + " pl-[2px] font-bold whitespace-nowrap"}>客户要求外层完成<span className="text-[#e81010]">铜厚</span>（um）</td>
          <td className={C + " bg-[#e8f0dd]"} />
        </tr>
        <tr className="h-[30px]">
          <th scope="row" className={RH + " bg-[#e4ecf7]"}>11</th>
          <td rowSpan={3} className="border-r border-black" />
          <td className={C + " text-center font-bold"}>1</td>
          <td colSpan={7} className={C + " pl-[2px] text-[13px] font-bold whitespace-nowrap text-[#d81010]"}>允许加大焊环以满足标准，空间不够的位置允许局部破环（允许不满足验收标准）</td>
        </tr>
        <tr className="h-[37px]">
          <th scope="row" className={RH + " bg-[#fbcb82]"}>12</th>
          <td className={C + " text-center font-bold"}>2</td>
          <td colSpan={7} className="border-4 border-double border-black p-0 text-[13px] font-bold whitespace-nowrap">0.5mmpitch夹线的BGA，允许BGA夹线位置削BGA焊盘1.3mil，按评审流程制作</td>
        </tr>
        <tr className="h-[36px]">
          <th scope="row" className={RH + " bg-[#e4ecf7]"} />
          <td className={C + " text-center font-bold"}>3</td>
          <td colSpan={7} className={C + " pl-[2px] text-[13px] font-bold"}>删除整板非功能焊盘</td>
        </tr>
      </tbody>
    </table>
  );
}

function Spreadsheet() {
  return (
    <section className={CJK + " absolute top-[586px] right-0 bottom-0 left-[1192px] flex flex-col overflow-hidden bg-[#c3d8f2] text-[15px] text-[#1e4287] shadow-lg"}>
      <header className="flex h-[34px] shrink-0 items-start bg-white pl-[54px]">
        <button aria-label="Office 按钮" className="absolute top-2 left-[5px] z-10"><Office /></button>
        <div className="mt-[6px] flex h-[25px] items-center gap-[11px] rounded-r-full border border-l-0 border-[#b9bdc6] pr-[14px] pl-[13px]">
          <button aria-label="保存">
            <svg width="15" height="15" viewBox="0 0 15 15"><path d="M1 1 H14 V14 H1 Z" fill="#4a55b8" stroke="#2a3080" /><rect x="3" y="1" width="9" height="6" fill="#fff" /><rect x="4" y="9" width="7" height="5" fill="#dde" /><rect x="5" y="10" width="2" height="4" fill="#223" /></svg>
          </button>
          <button aria-label="新建">
            <svg width="13" height="15" viewBox="0 0 13 15"><path d="M1 1 H8 L12 5 V14 H1 Z M8 1 V5 H12" fill="#fff" stroke="#445" /></svg>
          </button>
        </div>
        <button aria-label="自定义快速访问工具栏" className="mt-[14px] ml-[9px]">
          <svg width="8" height="10" viewBox="0 0 8 10"><path d="M0 1 H8 V3 H0 Z M0 5 H8 L4 9 Z" fill="#1e3a80" /></svg>
        </button>
        <h2 className="mr-[3px] ml-auto leading-[33px] font-normal whitespace-pre text-black">CX0LF03SA0-预审指示.xls   [兼容模式] -</h2>
      </header>
      <div className="flex h-[30px] shrink-0 bg-[#bfdbff] pt-px pl-[60px]">
        {["开始", "插入", "页面布局", "公式", "数据", "审阅", "视图"].map((t, i) => (
          <button
            key={t}
            className={i === 0 ? "mr-[3px] rounded-t-[4px] border border-b-0 border-[#8fb0da] bg-[#e6effa] px-[11px] pb-1" : "px-[15px] pb-1"}
          >
            {t}
          </button>
        ))}
      </div>
      <div className="shrink-0"><Ribbon /></div>
      <div className="mt-[5px] ml-1 flex h-[41px] shrink-0 items-center border-y border-l border-[#a3bedd] bg-gradient-to-b from-white to-[#e2f0fd] pb-[2px] pl-[5px]">
        <svg width="14" height="17" viewBox="0 0 14 17"><path d="M7 1 Q10 3 13 3 Q14 12 7 16 Q0 12 1 3 Q4 3 7 1 Z" fill="#f08a20" stroke="#876" /><path d="M7 2 Q4 4 2 4 Q1 8 3 10 Q8 9 12 4 Q9 4 7 2 Z" fill="#fcd36a" /></svg>
        <b className="ml-[13px]">安全警告</b>
        <span className="ml-3">宏已被禁用。</span>
        <button className="ml-[10px] h-[22px] w-[79px] border border-[#9db4d4] bg-white leading-[19px]">选项...</button>
      </div>
      <div className="mt-[4px] flex h-[21px] shrink-0 items-stretch border-y border-[#7f9dc8] bg-white">
        <input aria-label="名称框" defaultValue="C12" className="w-[137px] pb-px pl-1 text-center font-normal text-black outline-none" />
        <span className="flex w-[22px] items-center justify-center">
          <svg width="8" height="5" viewBox="0 0 8 5"><path d="M0 0 H8 L4 5 Z" fill="#000" /></svg>
        </span>
        <span className="flex w-[76px] items-center justify-between rounded-l-full border border-[#9fb6d8] bg-gradient-to-b from-white to-[#b5cbea] px-1">
          <span className="h-2 w-2 rounded-full bg-[#aebccf]" />
          <i className={SERIF + " text-[15px] leading-4 font-bold text-[#444]"}>fx</i>
        </span>
        <input
          aria-label="编辑栏"
          defaultValue="0.5mmpitch夹线的BGA，允许BGA夹线位置削BGA焊盘1.3mil，按评审流程制作"
          className="min-w-0 flex-1 pb-px pl-3 text-black outline-none"
        />
      </div>
      <div className="mt-[3px] min-h-0 flex-1 overflow-hidden bg-white"><Sheet /></div>
    </section>
  );
}

function Pointers() {
  return (
    <svg className="pointer-events-none absolute inset-0 h-full w-full" aria-hidden="true">
      <g stroke="#f00" strokeLinecap="round" strokeWidth="5" fill="#f00" strokeLinejoin="round">
        <path d="M1522 449 L1562 482" />
        <path d="M1564 474 L1555 484 L1578 494 Z" strokeWidth="3" />
        <path d="M911 962 L955 1042" strokeWidth="4" />
        <path d="M948 1043 L961 1037 L966 1061 Z" strokeWidth="2" />
        <path d="M1563 923 L1657 1046" />
        <path d="M1650 1044 L1662 1036 L1669 1061 Z" strokeWidth="3" />
      </g>
    </svg>
  );
}

export default function App() {
  return (
    <div className="relative h-screen w-full overflow-hidden bg-[#00a2ee]">
      <MainWindow />
      <Checklist />
      <Histogram />
      <ResultsViewer />
      <Spreadsheet />
      <Pointers />
    </div>
  );
}
